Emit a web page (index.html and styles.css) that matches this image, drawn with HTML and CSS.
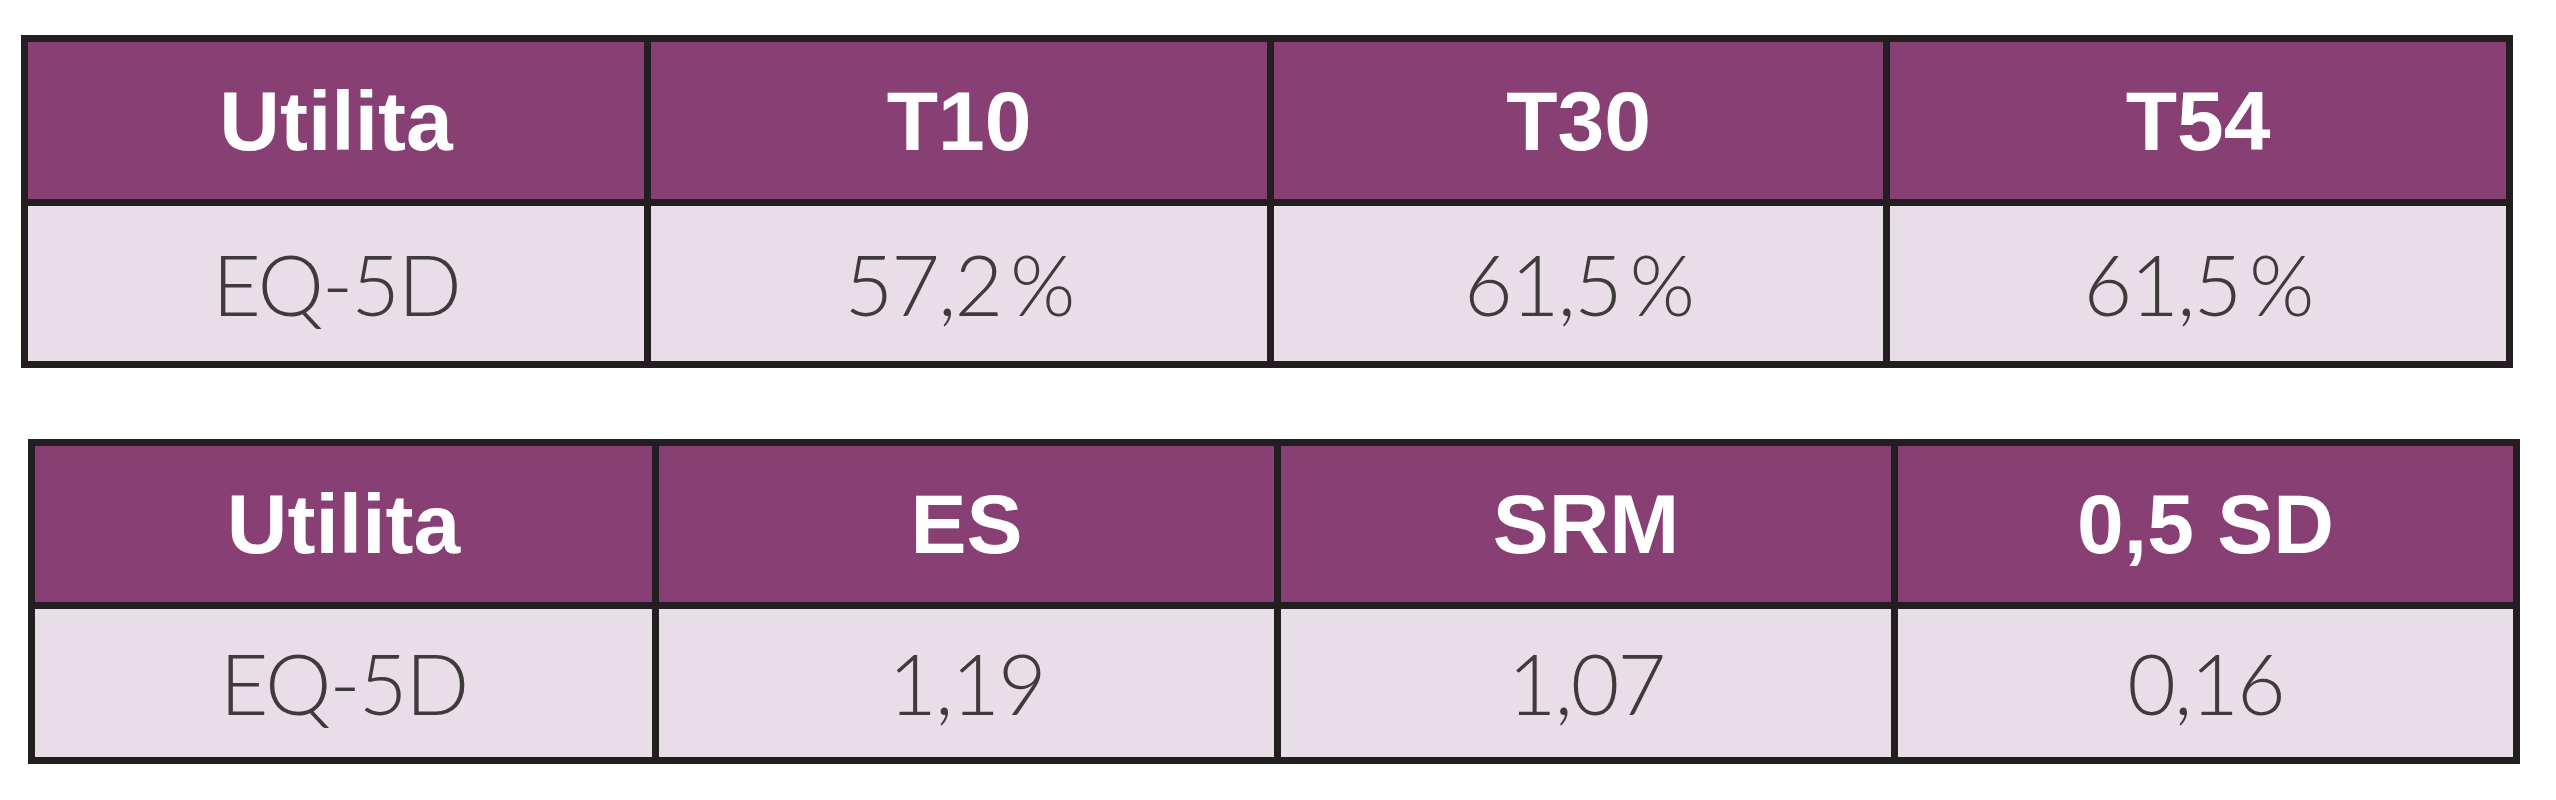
FILE: index.html
```html
<!DOCTYPE html>
<html lang="it">
<head>
<meta charset="utf-8">
<title>Utilita EQ-5D</title>
<link rel="stylesheet" href="styles.css">
</head>
<body>
<div class="page">
  <div class="table t1">
    <div class="cell head">Utilita</div>
    <div class="cell head">T10</div>
    <div class="cell head">T30</div>
    <div class="cell head">T54</div>
    <div class="cell body">EQ-5D</div>
    <div class="cell body">57,2 %</div>
    <div class="cell body">61,5 %</div>
    <div class="cell body">61,5 %</div>
  </div>
  <div class="table t2">
    <div class="cell head">Utilita</div>
    <div class="cell head">ES</div>
    <div class="cell head">SRM</div>
    <div class="cell head">0,5 SD</div>
    <div class="cell body">EQ-5D</div>
    <div class="cell body">1,19</div>
    <div class="cell body">1,07</div>
    <div class="cell body">0,16</div>
  </div>
</div>
</body>
</html>
```
FILE: styles.css
```css
html, body {
  margin: 0;
  padding: 0;
  background: #ffffff;
}

.page {
  display: flex;
  flex-direction: column;
  align-items: flex-start;
  padding-top: 35px;
  gap: 71px;
}

.table {
  display: grid;
  gap: 7px;
  padding: 7px;
  background: #231f20;
}

.t1 {
  margin-left: 21px;
  grid-template-columns: 616px 616px 609px 616px;
  grid-template-rows: 157px 155px;
}

.t2 {
  margin-left: 28px;
  grid-template-columns: 617px 615px 610px 615px;
  grid-template-rows: 156px 148px;
}

.cell {
  display: flex;
  align-items: center;
  justify-content: center;
  font-family: "Liberation Sans", Arial, sans-serif;
  font-size: 84px;
  line-height: 1;
}

.head {
  background: #873f74;
  color: #ffffff;
  font-weight: 700;
}

.body {
  background: #e9dee7;
  color: #3f3a3c;
  font-family: "Lato", "Liberation Sans", sans-serif;
  font-weight: 300;
  font-size: 84px;
  letter-spacing: -2px;
  word-spacing: -12px;
}
```
